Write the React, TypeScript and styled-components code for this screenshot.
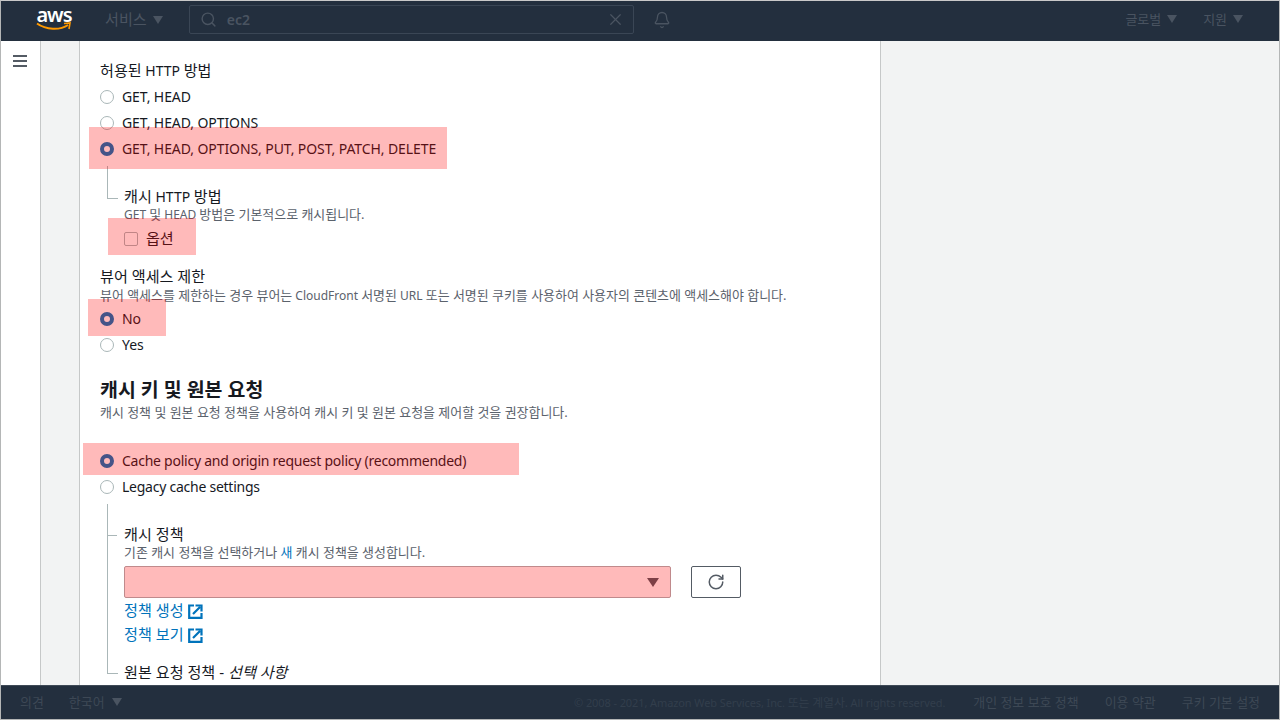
import React from "react";
import styled, { createGlobalStyle } from "styled-components";
import { Search, X, Bell, RotateCw } from "lucide-react";

const Global = createGlobalStyle`
  html, body { margin: 0; padding: 0; height: 100%; overflow: hidden; }
  body { font-family: "Noto Sans", "Noto Sans CJK KR", sans-serif; font-size: 14px; color: #16191f; }
`;

const Page = styled.div`
  box-sizing: border-box;
  width: 1280px;
  height: 720px;
  border: 1px solid #b4b6b6;
  border-top-color: #c9c9c9;
  display: flex;
  flex-direction: column;
  overflow: hidden;
`;

const Ko = styled.span`
  font-size: 1.08em;
  line-height: 1;
`;

const Bar = styled.div`
  box-sizing: border-box;
  display: flex;
  align-items: center;
  background: #232f3e;
  color: #4a5461;
  flex: none;
`;

const Header = styled(Bar)`
  height: 40px;
  padding: 0 0 3px 35px;
`;

const LogoBox = styled.div`
  width: 36px;
  height: 24px;
  margin-right: 33px;
  margin-top: -2px;
`;

const LogoText = styled.span`
  display: block;
  color: #fff;
  font: 600 20px/16px "Noto Sans", sans-serif;
  letter-spacing: -1px;
  text-align: center;
`;

const LogoSmile = styled.svg`
  display: block;
  width: 36px;
  height: 10px;
  margin-top: -1px;
`;

const Caret = styled.i<{ $size?: number; $color?: string }>`
  display: inline-block;
  width: 0;
  height: 0;
  border-left: ${(p) => p.$size ?? 5}px solid transparent;
  border-right: ${(p) => p.$size ?? 5}px solid transparent;
  border-top: ${(p) => (p.$size ?? 5) * 1.6}px solid ${(p) => p.$color ?? "#4a5461"};
`;

const NavItem = styled.div<{ $gap?: number; $size?: number }>`
  display: flex;
  align-items: center;
  gap: 6px;
  font-size: ${(p) => p.$size ?? 12}px;
  line-height: 18px;
  margin-right: ${(p) => p.$gap ?? 0}px;
`;

const SearchBox = styled.div`
  box-sizing: border-box;
  width: 445px;
  height: 29px;
  margin-right: 19px;
  border: 1px solid #3a4655;
  border-radius: 2px;
  display: flex;
  align-items: center;
  padding: 0 8px 0 10px;
  color: #4a5461;
`;

const SearchText = styled.span`
  flex: 1;
  margin-left: 10px;
  font-size: 14px;
  font-weight: 600;
`;

const HeaderRight = styled.div`
  margin-left: auto;
  display: flex;
  align-items: center;
  padding-right: 36px;
`;

const Body = styled.div`
  flex: 1;
  min-height: 0;
  display: flex;
  overflow: hidden;
`;

const Rail = styled.div`
  width: 40px;
  flex: none;
  background: #fff;
  border-right: 1px solid #c6c8c8;
  padding: 14px 0 0 11px;
  box-sizing: border-box;
`;

const Gutter = styled.div<{ $grow?: boolean }>`
  background: #f2f3f3;
  ${(p) => (p.$grow ? "flex: 1;" : "width: 38px; flex: none;")}
`;

const Card = styled.div`
  box-sizing: content-box;
  width: 780px;
  flex: none;
  background: #fff;
  border-left: 1px solid #c6c8c8;
  border-right: 1px solid #c6c8c8;
  padding: 19px 0 0 20px;
  overflow: hidden;
`;

const Label = styled.div<{ $top?: number }>`
  line-height: 22px;
  font-size: 14px;
  color: #16191f;
  margin-top: ${(p) => p.$top ?? 0}px;
`;

const Em = styled.em`
  font-style: italic;
`;

const Hint = styled.div<{ $top?: number }>`
  font-size: 12px;
  line-height: 18px;
  color: #5b626c;
  margin-top: ${(p) => p.$top ?? 0}px;
  position: relative;
`;

const Accent = styled.span`
  color: #0073bb;
`;

const Row = styled.div<{ $h?: number; $top?: number; $tight?: boolean }>`
  position: relative;
  display: flex;
  align-items: center;
  gap: 8px;
  height: ${(p) => p.$h ?? 26}px;
  margin-top: ${(p) => p.$top ?? 0}px;
  line-height: 20px;
  font-size: 14px;
  letter-spacing: ${(p) => (p.$tight ? -0.25 : -0.09)}px;
  color: #16191f;
`;

const Radio = styled.span<{ $on?: boolean }>`
  box-sizing: border-box;
  width: 14px;
  height: 14px;
  border-radius: 50%;
  flex: none;
  background: #fff;
  border: ${(p) => (p.$on ? "4px solid #0073bb" : "1px solid #aab7b8")};
`;

const Box = styled.span`
  box-sizing: border-box;
  width: 14px;
  height: 14px;
  flex: none;
  border: 1px solid #aab7b8;
  border-radius: 2px;
  background: #fff;
`;

const Mark = styled.div<{ $l: number; $t: number; $w: number; $h: number }>`
  position: absolute;
  left: ${(p) => p.$l}px;
  top: ${(p) => p.$t}px;
  width: ${(p) => p.$w}px;
  height: ${(p) => p.$h}px;
  background: rgba(255, 0, 0, 0.27);
  z-index: 2;
`;

const Tree = styled.div<{ $top: number; $line: number; $len: number }>`
  position: relative;
  margin: ${(p) => p.$top}px 0 0 24px;
  &::before {
    content: "";
    position: absolute;
    left: -17px;
    top: ${(p) => -p.$line}px;
    width: 10px;
    height: ${(p) => p.$len}px;
    border-left: 1px solid #aab7b8;
    border-bottom: 1px solid #aab7b8;
  }
`;

const TreeTick = styled.div`
  position: relative;
  &::before {
    content: "";
    position: absolute;
    left: -17px;
    top: 11px;
    width: 10px;
    border-top: 1px solid #aab7b8;
  }
`;

const Heading = styled.div`
  font-size: 18px;
  line-height: 24px;
  font-weight: 700;
  color: #16191f;
  margin-top: 20px;
`;

const SelectRow = styled.div`
  display: flex;
  gap: 20px;
  margin: 4px 0 1px;
`;

const Select = styled.div`
  box-sizing: border-box;
  width: 547px;
  height: 32px;
  border: 1px solid #c08a8c;
  border-radius: 2px;
  background: #ffbaba;
  display: flex;
  align-items: center;
  justify-content: flex-end;
  padding-right: 11px;
`;

const IconButton = styled.div`
  box-sizing: border-box;
  width: 50px;
  height: 32px;
  border: 1px solid #545b64;
  border-radius: 2px;
  background: #fff;
  color: #545b64;
  display: flex;
  align-items: center;
  justify-content: center;
`;

const Link = styled.a`
  display: flex;
  align-items: center;
  gap: 4px;
  height: 24px;
  font-size: 14px;
  color: #0073bb;
`;

const Footer = styled(Bar)`
  height: 34px;
  border-top: 1px solid #3f4a57;
  padding-left: 19px;
  font-size: 12px;
  color: #3d4855;
`;

const FootItem = styled.span<{ $left?: number }>`
  font-size: 12px;
  margin-left: ${(p) => p.$left ?? 0}px;
  display: flex;
  align-items: center;
  gap: 7px;
  white-space: nowrap;
`;

const FootRight = styled.div`
  margin-left: auto;
  display: flex;
  align-items: center;
  padding-right: 19px;
`;

const Copy = styled.span`
  font-size: 11px;
  letter-spacing: -0.1px;
  color: #323e4c;
  margin-right: 28px;
  white-space: nowrap;
`;

const Hamburger = () => (
  <svg width="16" height="12" viewBox="0 0 16 12" fill="#545b64" display="block">
    <rect x="1" y="0" width="14" height="2" />
    <rect x="1" y="5" width="14" height="2" />
    <rect x="1" y="10" width="14" height="2" />
  </svg>
);

const External = () => (
  <svg width="15" height="15" viewBox="0 0 15 15" fill="none" stroke="#0073bb" strokeWidth="2.2">
    <path d="M6 1.500H1.200v12.300h12.300V9" />
    <path d="M5 10l7-7M7.500 1.500h6V7.500" />
  </svg>
);

export default function App() {
  return (
    <Page>
      <Global />
      <Header>
        <LogoBox>
          <LogoText>aws</LogoText>
          <LogoSmile viewBox="0 0 36 10" fill="none">
            <path d="M1 1.500C10 8 24 8.500 32 3" stroke="#f90" strokeWidth="2" />
            <path d="M28 1.500L34 1 33 7" stroke="#f90" strokeWidth="1.600" />
          </LogoSmile>
        </LogoBox>
        <NavItem $gap={26} $size={14}>
          <Ko>서비스</Ko> <Caret />
        </NavItem>
        <SearchBox>
          <Search size={17} strokeWidth={2} />
          <SearchText>ec2</SearchText>
          <X size={19} strokeWidth={1.5} />
        </SearchBox>
        <Bell size={18} strokeWidth={1.7} />
        <HeaderRight>
          <NavItem $gap={26}>
            <Ko>글로벌</Ko> <Caret />
          </NavItem>
          <NavItem>
            <Ko>지원</Ko> <Caret />
          </NavItem>
        </HeaderRight>
      </Header>

      <Body>
        <Rail>
          <Hamburger />
        </Rail>
        <Gutter />
        <Card>
          <Label>
            <Ko>허용된</Ko> HTTP <Ko>방법</Ko>
          </Label>
          <Row $top={2}>
            <Radio />
            GET, HEAD
          </Row>
          <Row>
            <Radio />
            GET, HEAD, OPTIONS
          </Row>
          <Row>
            <Mark $l={-11} $t={-9} $w={358} $h={42} />
            <Radio $on />
            GET, HEAD, OPTIONS, PUT, POST, PATCH, DELETE
          </Row>

          <Tree $top={24} $line={20} $len={32}>
            <Label>
              <Ko>캐시</Ko> HTTP <Ko>방법</Ko>
            </Label>
            <Hint $top={-2}>
              GET <Ko>및</Ko> HEAD <Ko>방법은 기본적으로 캐시됩니다.</Ko>
            </Hint>
            <Row $top={2}>
              <Mark $l={-16} $t={-8} $w={88} $h={37} />
              <Box />
              <Ko>옵션</Ko>
            </Row>
          </Tree>

          <Label $top={14}>
            <Ko>뷰어 액세스 제한</Ko>
          </Label>
          <Hint $top={-1}>
            <Ko>뷰어 액세스를 제한하는 경우 뷰어는</Ko> CloudFront <Ko>서명된</Ko> URL{" "}
            <Ko>또는 서명된 쿠키를 사용하여 사용자의 콘텐츠에 액세스해야 합니다.</Ko>
          </Hint>
          <Row $top={1}>
            <Mark $l={-12} $t={-7} $w={78} $h={37} />
            <Radio $on />
            No
          </Row>
          <Row>
            <Radio />
            Yes
          </Row>

          <Heading>
            <Ko>캐시 키 및 원본 요청</Ko>
          </Heading>
          <Hint $top={2}>
            <Ko>캐시 정책 및 원본 요청 정책을 사용하여 캐시 키 및 원본 요청을 제어할 것을 권장합니다.</Ko>
          </Hint>

          <Row $top={26} $tight>
            <Mark $l={-17} $t={-5} $w={436} $h={32} />
            <Radio $on />
            Cache policy and origin request policy (recommended)
          </Row>
          <Row $tight>
            <Radio />
            Legacy cache settings
          </Row>

          <Tree $top={24} $line={20} $len={169}>
            <TreeTick>
              <Label>
                <Ko>캐시 정책</Ko>
              </Label>
            </TreeTick>
            <Hint $top={-2}>
              <Ko>
                기존 캐시 정책을 선택하거나 <Accent>새</Accent> 캐시 정책을 생성합니다.
              </Ko>
            </Hint>
            <SelectRow>
              <Select>
                <Caret $size={6} $color="#7d4046" />
              </Select>
              <IconButton>
                <RotateCw size={18} strokeWidth={2} />
              </IconButton>
            </SelectRow>
            <Link>
              <Ko>정책 생성</Ko> <External />
            </Link>
            <Link>
              <Ko>정책 보기</Ko> <External />
            </Link>
            <Label $top={15}>
              <Ko>
                원본 요청 정책 - <Em>선택 사항</Em>
              </Ko>
            </Label>
          </Tree>
        </Card>
        <Gutter $grow />
      </Body>

      <Footer>
        <FootItem>
          <Ko>의견</Ko>
        </FootItem>
        <FootItem $left={25}>
          <Ko>한국어</Ko> <Caret />
        </FootItem>
        <FootRight>
          <Copy>
            © 2008 - 2021, Amazon Web Services, Inc. <Ko>또는 계열사.</Ko> All rights reserved.
          </Copy>
          <FootItem>
            <Ko>개인 정보 보호 정책</Ko>
          </FootItem>
          <FootItem $left={26}>
            <Ko>이용 약관</Ko>
          </FootItem>
          <FootItem $left={26}>
            <Ko>쿠키 기본 설정</Ko>
          </FootItem>
        </FootRight>
      </Footer>
    </Page>
  );
}
